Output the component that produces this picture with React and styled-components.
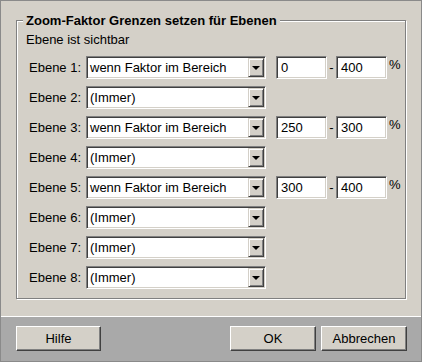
import React from "react";
import styled, { createGlobalStyle } from "styled-components";

const GlobalStyle = createGlobalStyle`
  html, body {
    margin: 0;
    padding: 0;
    background: #d4d0c8;
  }
  body {
    font-family: "Liberation Sans", Arial, sans-serif;
    font-size: 13px;
    color: #000;
  }
`;

const Dialog = styled.div`
  width: 422px;
  height: 362px;
  box-sizing: border-box;
  border: 1px solid #8a8a8a;
  display: flex;
  flex-direction: column;
  background: #d4d0c8;
`;

const Body = styled.div`
  height: 315px;
  box-sizing: border-box;
  padding: 12px 15px 0 15px;
`;

const Group = styled.fieldset`
  width: 390px;
  box-sizing: border-box;
  margin: 0;
  padding: 4px 0 9px 0;
  border: 1px solid #808080;
  box-shadow: 1px 1px 0 #fff, inset 1px 1px 0 #fff;
  min-inline-size: 0;
`;

const Legend = styled.legend`
  margin-left: 6px;
  padding: 0 3px;
  font-weight: bold;
  line-height: 15px;
  background: #d4d0c8;
`;

const Content = styled.div`
  padding-left: 9px;
`;

const Caption = styled.div`
  line-height: 15px;
  margin-bottom: 9px;
`;

const Rows = styled.div`
  display: flex;
  flex-direction: column;
  gap: 7px;
`;

const Row = styled.div`
  display: flex;
  align-items: center;
  height: 23px;
`;

const Label = styled.span`
  width: 60px;
  box-sizing: border-box;
  padding-left: 3px;
  white-space: nowrap;
`;

const sunken = `
  box-sizing: border-box;
  height: 23px;
  background: #fff;
  border: 1px solid;
  border-color: #808080 #fff #fff #808080;
  box-shadow: inset 1px 1px 0 #404040, inset -1px -1px 0 #d4d0c8;
`;

const Combo = styled.div`
  ${sunken}
  width: 180px;
  padding: 1px;
  display: flex;
  align-items: stretch;
`;

const ComboText = styled.span`
  flex: 1;
  padding-left: 2px;
  line-height: 19px;
  white-space: nowrap;
  overflow: hidden;
`;

const DropButton = styled.span`
  width: 16px;
  box-sizing: border-box;
  background: #d4d0c8;
  border: 1px solid;
  border-color: #d4d0c8 #404040 #404040 #d4d0c8;
  box-shadow: inset 1px 1px 0 #fff, inset -1px -1px 0 #808080;
  display: flex;
  align-items: center;
  justify-content: center;
`;

const Arrow = styled.span`
  width: 0;
  height: 0;
  border-left: 4px solid transparent;
  border-right: 4px solid transparent;
  border-top: 4px solid #000;
  margin-top: 1px;
`;

const Field = styled.div`
  ${sunken}
  width: 51px;
  padding-left: 4px;
  line-height: 21px;
`;

const Range = styled.div`
  display: flex;
  align-items: center;
  margin-left: 10px;
`;

const Dash = styled.span`
  width: 9px;
  text-align: center;
`;

const Percent = styled.span`
  margin-left: 2px;
  align-self: flex-start;
  line-height: 17px;
`;

const Footer = styled.div`
  flex: 1;
  border-top: 1px solid #fff;
  background: #a9a9a9;
  display: flex;
  gap: 5px;
  padding: 9px 14px 0 15px;
  align-items: flex-start;
`;

const Button = styled.button`
  width: ${({ $w }) => $w || 86}px;
  height: 25px;
  box-sizing: border-box;
  margin: 0;
  margin-right: ${({ $push }) => ($push ? "auto" : "0")};
  padding: 0;
  font: inherit;
  color: #000;
  background: #d4d0c8;
  border: 1px solid;
  border-color: #fff #404040 #404040 #fff;
  box-shadow: inset -1px -1px 0 #808080;
`;

const layers = [
  { mode: "wenn Faktor im Bereich", from: "0", to: "400" },
  { mode: "(Immer)" },
  { mode: "wenn Faktor im Bereich", from: "250", to: "300" },
  { mode: "(Immer)" },
  { mode: "wenn Faktor im Bereich", from: "300", to: "400" },
  { mode: "(Immer)" },
  { mode: "(Immer)" },
  { mode: "(Immer)" },
];

const ComboBox = ({ value }) => (
  <Combo>
    <ComboText>{value}</ComboText>
    <DropButton>
      <Arrow />
    </DropButton>
  </Combo>
);

export default function App() {
  return (
    <>
      <GlobalStyle />
      <Dialog>
        <Body>
          <Group>
            <Legend>Zoom-Faktor Grenzen setzen für Ebenen</Legend>
            <Content>
              <Caption>Ebene ist sichtbar</Caption>
              <Rows>
                {layers.map((layer, i) => (
                  <Row key={i}>
                    <Label>Ebene {i + 1}:</Label>
                    <ComboBox value={layer.mode} />
                    {layer.from !== undefined && (
                      <Range>
                        <Field>{layer.from}</Field>
                        <Dash>-</Dash>
                        <Field>{layer.to}</Field>
                        <Percent>%</Percent>
                      </Range>
                    )}
                  </Row>
                ))}
              </Rows>
            </Content>
          </Group>
        </Body>
        <Footer>
          <Button $w={85} $push>Hilfe</Button>
          <Button>OK</Button>
          <Button>Abbrechen</Button>
        </Footer>
      </Dialog>
    </>
  );
}
